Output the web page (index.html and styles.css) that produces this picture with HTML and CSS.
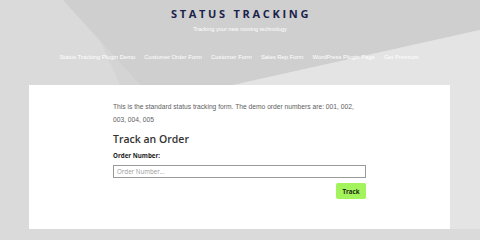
FILE: index.html
```html
<!DOCTYPE html>
<html lang="en">
<head>
<meta charset="utf-8">
<title>Status Tracking</title>
<link rel="stylesheet" href="styles.css">
</head>
<body>
<svg class="bg" width="480" height="229" viewBox="0 0 480 229" aria-hidden="true">
  <rect x="0" y="0" width="480" height="229" fill="#dadada"/>
  <polygon points="63,0 480,0 480,30 233,85 140,85" fill="#cfcfcf"/>
  <polygon points="63,0 140,85 120,85 100,40" fill="#d4d4d4"/>
  <polygon points="480,30 233,85 233,229 480,229" fill="#e4e4e4"/>
</svg>
<div class="page">
  <header class="site-header">
    <h1 class="site-title">STATUS TRACKING</h1>
    <p class="site-tagline">Tracking your new moving technology</p>
    <nav class="site-nav">
      <a href="#">Status Tracking Plugin Demo</a>
      <a href="#">Customer Order Form</a>
      <a href="#">Customer Form</a>
      <a href="#">Sales Rep Form</a>
      <a href="#">WordPress Plugin Page</a>
      <a href="#">Get Premium</a>
    </nav>
  </header>
  <main class="card">
    <div class="content">
      <p class="intro">This is the standard status tracking form. The demo order numbers are: 001, 002, 003, 004, 005</p>
      <h2 class="form-title">Track an Order</h2>
      <form class="track-form">
        <label class="field-label" for="order">Order Number:</label>
        <input class="field-input" id="order" type="text" placeholder="Order Number...">
        <div class="actions">
          <button class="track-btn" type="button">Track</button>
        </div>
      </form>
    </div>
  </main>
</div>
</body>
</html>
```

FILE: styles.css
```css
html {
  margin: 0;
  padding: 0;
  background: #dadada;
}
body {
  margin: 0;
  padding: 0;
  width: 480px;
  height: 229px;
  overflow: hidden;
  position: relative;
  background: #dadada;
  font-family: "Liberation Sans", Arial, sans-serif;
}
.bg {
  position: absolute;
  left: 0;
  top: 0;
  z-index: 0;
}
.page {
  position: relative;
  z-index: 1;
  display: flex;
  flex-direction: column;
  height: 229px;
}
.site-header {
  display: flex;
  flex-direction: column;
  align-items: center;
  padding-top: 7px;
  height: 85px;
  box-sizing: border-box;
}
.site-title {
  margin: 0;
  font-family: "Open Sans", sans-serif;
  font-weight: 700;
  font-size: 11px;
  line-height: 14px;
  letter-spacing: 2.7px;
  color: #1b1f4b;
  padding-left: 2px;
}
.site-tagline {
  margin: 4px 0 0;
  font-size: 5.6px;
  line-height: 8px;
  color: #ffffff;
}
.site-nav {
  display: flex;
  gap: 9px;
  margin-top: 20px;
  padding-right: 2px;
}
.site-nav a {
  color: #ffffff;
  text-decoration: none;
  font-size: 5.9px;
  line-height: 8px;
}
.card {
  flex: 1;
  margin: 0 30px 0 29px;
  background: #ffffff;
  padding: 15px 84px 0;
}
.content {
  width: 253px;
}
.intro {
  margin: 0;
  font-size: 6.7px;
  line-height: 13px;
  color: #5e5e5e;
}
.form-title {
  margin: 6px 0 0;
  font-family: "Open Sans", sans-serif;
  font-weight: 600;
  font-size: 10.5px;
  line-height: 14px;
  color: #333333;
}
.track-form {
  display: flex;
  flex-direction: column;
  margin-top: 6px;
}
.field-label {
  font-family: "Open Sans", sans-serif;
  font-weight: 700;
  font-size: 6.2px;
  line-height: 8px;
  color: #222222;
}
.field-input {
  margin-top: 5px;
  height: 13px;
  box-sizing: border-box;
  border: 1px solid #9a9a9a;
  padding: 0 3px;
  font-family: "Open Sans", sans-serif;
  font-size: 6.2px;
  color: #333;
  outline: none;
}
.field-input::placeholder {
  color: #9a9a9a;
}
.actions {
  display: flex;
  justify-content: flex-end;
  margin-top: 5px;
}
.track-btn {
  width: 30px;
  height: 16px;
  border: 0;
  border-radius: 2px;
  background: #a2f35c;
  padding: 0;
  font-family: "Open Sans", sans-serif;
  font-weight: 700;
  font-size: 6.2px;
  color: #1e2a14;
}
```
